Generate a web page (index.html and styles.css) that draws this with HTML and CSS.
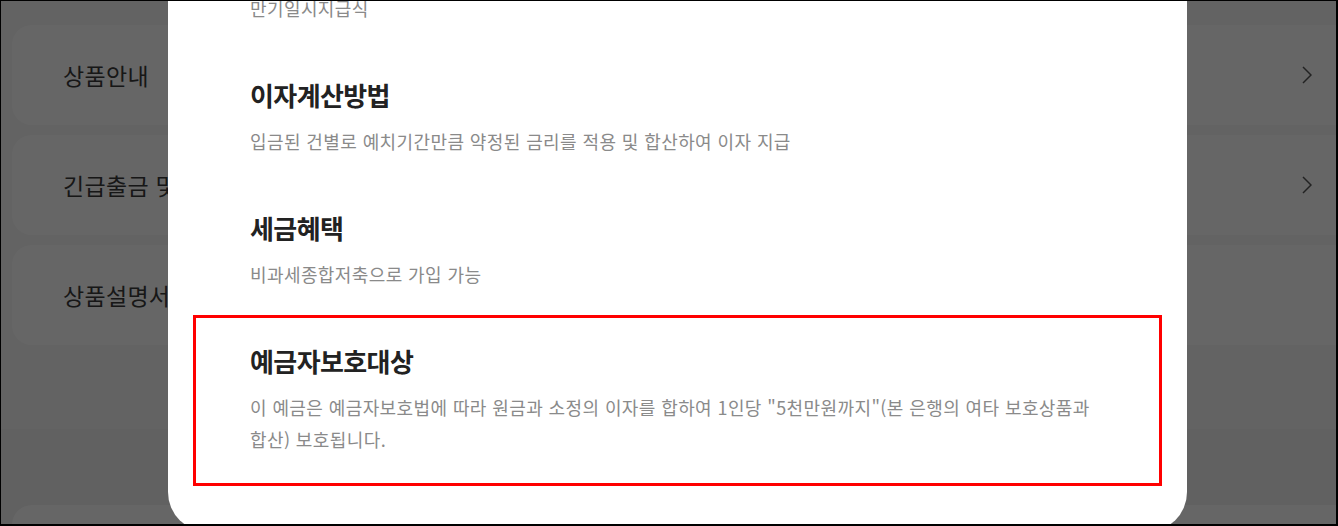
FILE: index.html
```html
<!DOCTYPE html>
<html lang="ko">
<head>
<meta charset="utf-8">
<title>상품안내</title>
<link rel="stylesheet" href="styles.css">
</head>
<body>
<div class="page">
  <div class="upper">
    <ul class="menu">
      <li class="card"><span class="card-label">상품안내</span>
        <svg class="chev" width="10" height="18" viewBox="0 0 10 18"><polyline points="1,1 9,9 1,17" fill="none" stroke="currentColor" stroke-width="1.5"/></svg>
      </li>
      <li class="card"><span class="card-label">긴급출금 및 해지</span>
        <svg class="chev" width="10" height="18" viewBox="0 0 10 18"><polyline points="1,1 9,9 1,17" fill="none" stroke="currentColor" stroke-width="1.5"/></svg>
      </li>
      <li class="card"><span class="card-label">상품설명서</span></li>
    </ul>
  </div>
  <div class="lower">
    <div class="card card-plain"></div>
  </div>
</div>

<div class="dim"></div>

<div class="modal">
  <section class="item">
    <h3 class="item-title">이자지급방식</h3>
    <p class="item-desc">만기일시지급식</p>
  </section>
  <section class="item">
    <h3 class="item-title">이자계산방법</h3>
    <p class="item-desc">입금된 건별로 예치기간만큼 약정된 금리를 적용 및 합산하여 이자 지급</p>
  </section>
  <section class="item">
    <h3 class="item-title">세금혜택</h3>
    <p class="item-desc">비과세종합저축으로 가입 가능</p>
  </section>
  <section class="item item-highlight">
    <h3 class="item-title">예금자보호대상</h3>
    <p class="item-desc">이 예금은 예금자보호법에 따라 원금과 소정의 이자를 합하여 1인당 "5천만원까지"(본 은행의 여타 보호상품과 합산) 보호됩니다.</p>
  </section>
</div>

<div class="frame"></div>
</body>
</html>
```

FILE: styles.css
```css
* { box-sizing: border-box; }

html, body {
  margin: 0;
  padding: 0;
  height: 100%;
  overflow: hidden;
}

body {
  font-family: "Noto Sans CJK KR", "Noto Sans", sans-serif;
  background: #f9f9f9;
  word-break: keep-all;
}

.upper {
  background: #f8f8f8;
  padding: 25px 0 84px 12px;
}

.lower {
  background: #f2f2f2;
  padding: 76px 0 0 12px;
  height: 200px;
}

.menu {
  list-style: none;
  margin: 0;
  padding: 0;
  display: flex;
  flex-direction: column;
  gap: 10px;
}

.card {
  height: 100px;
  background: #fff;
  border-radius: 20px 0 0 20px;
  display: flex;
  align-items: center;
  justify-content: space-between;
  padding: 0 26px 0 51px;
}

.card-label {
  font-size: 23px;
  letter-spacing: 0.3px;
  color: #3a3a3a;
  white-space: nowrap;
}

.chev {
  color: #555;
  display: block;
}

.dim {
  position: fixed;
  inset: 0;
  background: rgba(0, 0, 0, 0.6);
}

.modal {
  position: fixed;
  top: -81px;
  left: 168px;
  width: 1019px;
  background: #fff;
  border-radius: 40px;
  padding: 0 0 49px;
}

.item {
  margin: 0 28px;
  padding: 28px 40px 28px 54px;
}

.item-title {
  margin: 0;
  font-size: 26px;
  line-height: 30px;
  font-weight: 700;
  letter-spacing: -0.6px;
  color: #222;
}

.item-desc {
  margin: 15px 0 0;
  font-size: 18px;
  line-height: 32px;
  letter-spacing: 0.4px;
  color: #8a8a8a;
}

.item-highlight {
  outline: 3px solid #f00;
}

.frame {
  position: fixed;
  inset: 0;
  border: 1px solid #000;
  border-right-width: 2px;
  border-bottom-width: 2px;
  pointer-events: none;
}
```
